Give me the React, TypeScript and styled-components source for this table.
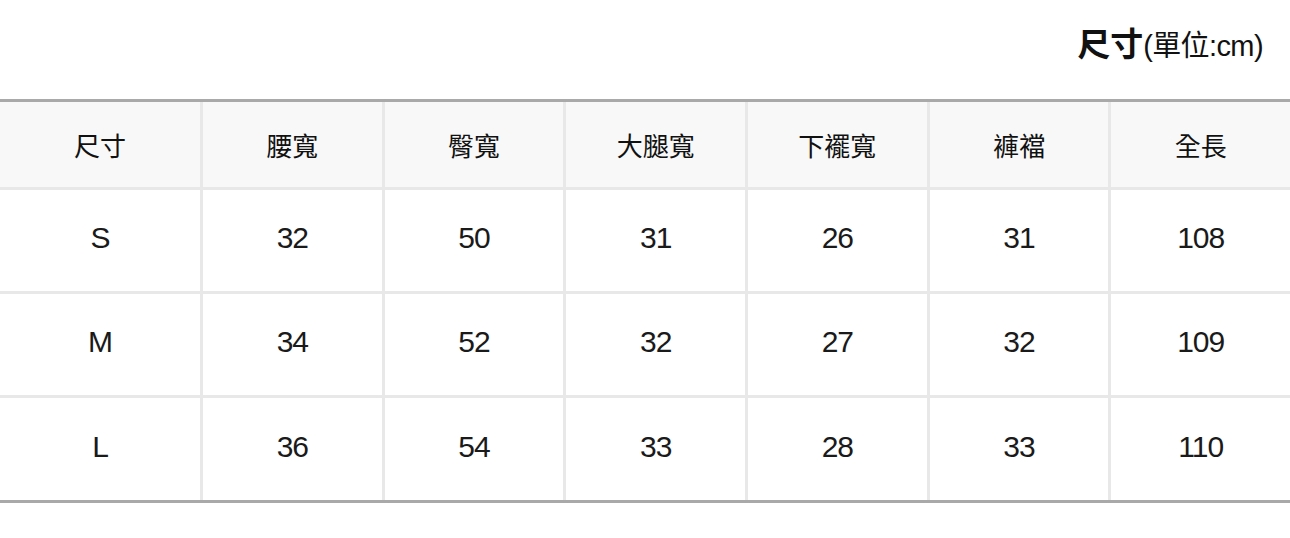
import styled, { createGlobalStyle } from 'styled-components';

const GlobalStyle = createGlobalStyle`
  html, body {
    margin: 0;
    padding: 0;
    background: #ffffff;
  }
  body {
    font-family: 'Liberation Sans', 'Noto Sans CJK TC', sans-serif;
    color: #111111;
  }
`;

const StyledPage = styled.div`
  width: 1290px;
  display: flex;
  flex-direction: column;
`;

const StyledCaption = styled.div`
  height: 99px;
  box-sizing: border-box;
  padding: 20px 27px 0 0;
  display: flex;
  justify-content: flex-end;
  align-items: baseline;
  line-height: 44px;
`;

const StyledCaptionMain = styled.span`
  font-family: 'Noto Sans CJK TC', sans-serif;
  font-weight: 700;
  font-size: 33px;
`;

const StyledCaptionUnit = styled.span`
  font-family: 'Liberation Sans', 'Noto Sans CJK TC', sans-serif;
  font-size: 29px;
  letter-spacing: -0.6px;
`;

const StyledTable = styled.div`
  display: grid;
  grid-template-columns: 200px repeat(6, 1fr);
  grid-template-rows: 85px 101px 101px 102px;
  gap: 3px;
  background: #e8e8e8;
  border-top: 3px solid #a9a9a9;
  border-bottom: 3px solid #a9a9a9;
`;

const StyledCell = styled.div<{ $head?: boolean }>`
  display: flex;
  align-items: center;
  justify-content: center;
  background: ${(p) => (p.$head ? '#f8f8f8' : '#ffffff')};
  font-family: ${(p) =>
    p.$head
      ? "'Noto Sans CJK TC', sans-serif"
      : "'Liberation Sans', 'Noto Sans CJK TC', sans-serif"};
  font-size: ${(p) => (p.$head ? '26px' : '30px')};
  letter-spacing: ${(p) => (p.$head ? '0' : '-1px')};
  color: ${(p) => (p.$head ? '#111111' : '#1a1a1a')};
  padding-bottom: ${(p) => (p.$head ? '0' : '5px')};
`;

const headers = ['尺寸', '腰寬', '臀寬', '大腿寬', '下襬寬', '褲襠', '全長'];

const rows = [
  ['S', '32', '50', '31', '26', '31', '108'],
  ['M', '34', '52', '32', '27', '32', '109'],
  ['L', '36', '54', '33', '28', '33', '110'],
];

const App = () => {
  return (
    <>
      <GlobalStyle />
      <StyledPage>
        <StyledCaption>
          <StyledCaptionMain>尺寸</StyledCaptionMain>
          <StyledCaptionUnit>(單位:cm)</StyledCaptionUnit>
        </StyledCaption>
        <StyledTable>
          {headers.map((h) => (
            <StyledCell $head key={h}>
              {h}
            </StyledCell>
          ))}
          {rows.map((row) =>
            row.map((v, i) => <StyledCell key={row[0] + i}>{v}</StyledCell>)
          )}
        </StyledTable>
      </StyledPage>
    </>
  );
};

export default App;
